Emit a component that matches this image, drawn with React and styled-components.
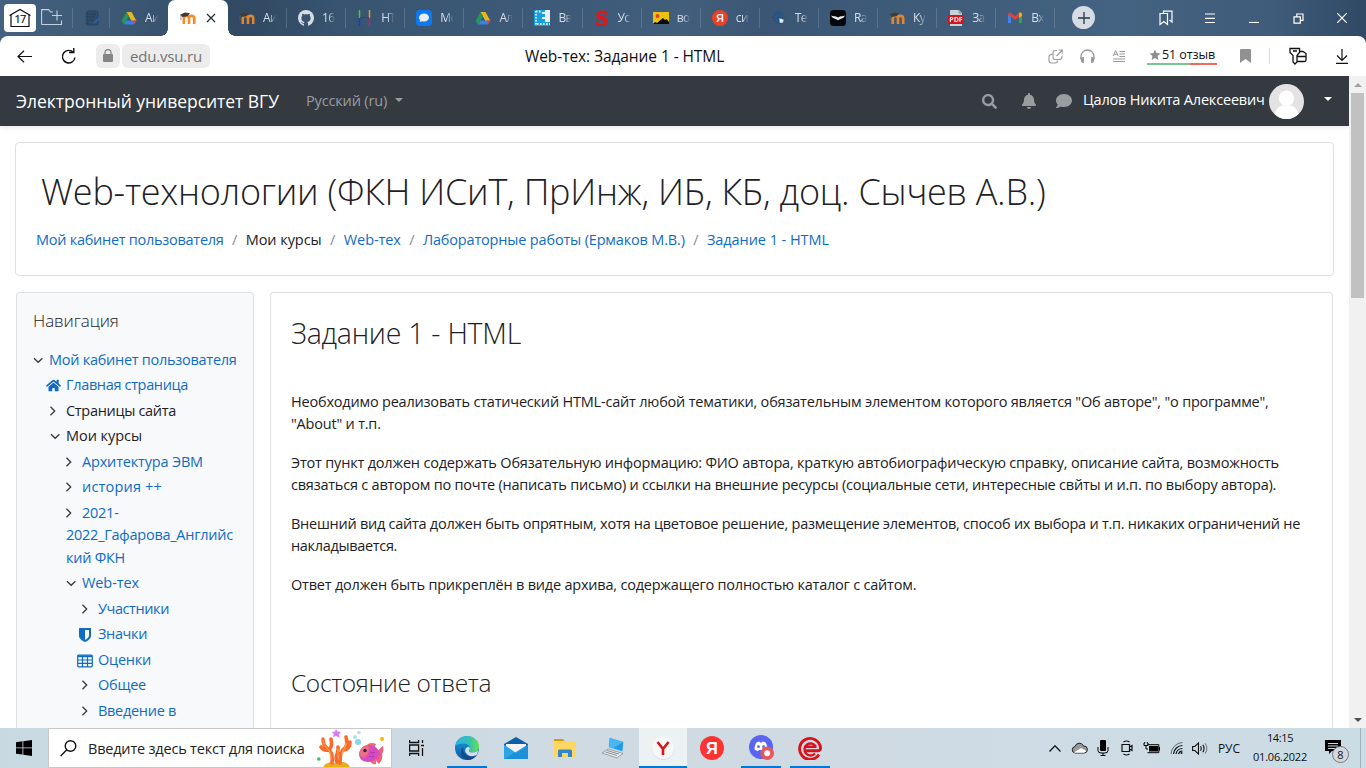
import React from 'react';
import styled, { createGlobalStyle, css } from 'styled-components';
import { FaHome, FaSearch, FaBell, FaComment } from 'react-icons/fa';

const Global = createGlobalStyle`
  * { box-sizing: border-box; }
  body { margin: 0; background: #fff; font-family: "Open Sans", "Noto Sans", sans-serif; overflow: hidden; }
  svg { display: block; flex: none; }
`;

/* ---------- shared ---------- */
const Screen = styled.div`
  width: 1366px;
  height: 768px;
  display: flex;
  flex-direction: column;
  overflow: hidden;
`;
const Label = styled.span`
  letter-spacing: ${p => p.$ls || 0}px;
  white-space: nowrap;
`;
const Cell = styled.div`
  width: ${p => p.$w}px;
  height: 100%;
  flex: none;
  display: flex;
  align-items: center;
  justify-content: center;
`;

/* ---------- browser chrome ---------- */
const Chrome = styled.header`
  flex: none;
  background: linear-gradient(90deg, #446280 0, #3a5672 10%, #314963 18%, #385470 25%, #3d5b79 42%, #415e7b 50%, #3a5674 56%, #3f5d7b 70%, #446281 82%, #3f5c7a 93%, #304965 100%);
`;
const TabStrip = styled.div`
  height: 36px;
  display: flex;
  align-items: stretch;
`;
const HomeButton = styled.div`
  width: 32px;
  height: 28px;
  flex: none;
  margin: 4px 4px 0;
  border-radius: 4px;
  background: #fff;
  display: flex;
  align-items: center;
  justify-content: center;
`;
const Tab = styled.div`
  width: ${p => p.$w || 59.1}px;
  flex: none;
  padding: 0 0 1px ${p => p.$pad || 11}px;
  display: flex;
  align-items: center;
  background: ${p => (p.$last ? 'none' : 'linear-gradient(#8599ab66, #8599ab66) right 8px / 1px 20px no-repeat')};
  svg { opacity: .9; }
`;
const TabTitle = styled.span`
  width: 14px;
  margin-left: 8px;
  overflow: hidden;
  white-space: nowrap;
  font-size: 12px;
  line-height: 18px;
  letter-spacing: -.6px;
  color: #d5dee6;
  mask-image: linear-gradient(90deg, #000 45%, transparent 95%);
`;
const ActiveTab = styled.div`
  position: relative;
  width: 60px;
  flex: none;
  padding: 0 12px 1px 12px;
  display: flex;
  align-items: center;
  justify-content: space-between;
  border-radius: 7px 7px 0 0;
  background: #fff;
  &::before, &::after {
    content: '';
    position: absolute;
    bottom: 0;
    width: 7px;
    height: 7px;
  }
  &::before { left: -7px; background: radial-gradient(circle at 0 0, transparent 6.5px, #fff 7px); }
  &::after { right: -7px; background: radial-gradient(circle at 100% 0, transparent 6.5px, #fff 7px); }
`;
const NewTab = styled.div`
  width: 23px;
  height: 23px;
  flex: none;
  margin: 6px 49px 0 17px;
  border-radius: 50%;
  background: #d5dce3;
  display: flex;
  align-items: center;
  justify-content: center;
`;
const Toolbar = styled.div`
  height: 40px;
  display: flex;
  align-items: center;
  background: #fff;
  border-radius: 8px 8px 0 0;
`;
const Pill = styled.div`
  width: ${p => p.$w}px;
  height: 24px;
  margin-right: 2px;
  border-radius: 6px;
  background: #ececec;
  color: #737373;
  font-size: 15px;
  display: flex;
  align-items: center;
  justify-content: center;
`;
const PageTitle = styled.div`
  width: 514px;
  margin-left: 313px;
  font-size: 15.5px;
  line-height: 24px;
  color: #111;
`;
const Rating = styled.div`
  width: 70px;
  height: 20px;
  margin: -2px 12px 0;
  padding-left: 2px;
  display: flex;
  align-items: center;
  gap: 1px;
  font-size: 12.5px;
  line-height: 18px;
  color: #111;
  background: linear-gradient(90deg, #77c796 0 61%, #ed6a5c 61%) 0 100% / 100% 2px no-repeat;
`;
const Divider = styled.div`
  width: 1px;
  height: 16px;
  margin: 0 6px 0 8px;
  background: #dcdcdc;
`;

/* ---------- site ---------- */
const Viewport = styled.div`
  height: 652px;
  flex: none;
  display: flex;
`;
const Page = styled.div`
  width: 1349px;
  display: flex;
  flex-direction: column;
  overflow: hidden;
`;
const Navbar = styled.nav`
  height: 50px;
  flex: none;
  padding-left: 16px;
  display: flex;
  align-items: center;
  background: #343a40;
  box-shadow: 0 2px 4px rgba(0, 0, 0, .08);
`;
const Brand = styled.div`
  width: 290px;
  font-size: 17.5px;
  line-height: 24px;
  color: #fff;
`;
const Language = styled.div`
  flex: 1;
  display: flex;
  align-items: center;
  gap: 8px;
  font-size: 14.5px;
  line-height: 22px;
  color: #9a9da0;
`;
const Caret = styled.i`
  border: 4.5px solid transparent;
  border-top-color: currentColor;
  border-bottom: 0;
  margin-bottom: ${p => p.$lift || 0}px;
`;
const NavIcon = styled.div`
  width: ${p => p.$w}px;
  display: flex;
  justify-content: center;
  color: #9a9da0;
`;
const User = styled.div`
  margin-left: 4px;
  display: flex;
  align-items: center;
  gap: 4px;
  font-size: 14.5px;
  line-height: 22px;
  color: #fff;
`;
const UserName = styled.div`
  width: 182px;
  padding-bottom: 3px;
`;
const UserCaret = styled.div`
  width: 45px;
  padding: 0 0 4px 20px;
  display: flex;
  color: #fff;
`;
const card = css`
  border: 1px solid #dee0e2;
  border-radius: 4px;
`;
const HeaderCard = styled.section`
  ${card}
  height: 134px;
  flex: none;
  margin: 16px 15px 16px;
  padding: 23px 20px 0;
`;
const CourseTitle = styled.h1`
  margin: 0 0 0 5px;
  font-size: 36px;
  line-height: 52px;
  font-weight: 300;
  color: #1d2125;
`;
const Breadcrumb = styled.ol`
  margin: 11px 0 0;
  padding: 0;
  list-style: none;
  display: flex;
  font-size: 14.5px;
  line-height: 22px;
`;
const Crumb = styled.li`
  color: ${p => (p.$plain ? '#1d2125' : '#0f6cc5')};
  &:not(:first-child)::before {
    content: '/';
    padding: 0 8.4px;
    color: #868e96;
  }
`;
const Columns = styled.div`
  flex: 1;
  padding: 0 16px;
  display: flex;
  align-items: stretch;
  gap: 16px;
`;
const Sidebar = styled.aside`
  ${card}
  width: 238px;
  border-bottom: 0;
  border-radius: 4px 4px 0 0;
  padding: 16px 0 0 11px;
  background: #f8f9fb;
`;
const BlockTitle = styled.h5`
  margin: 0 0 14.4px 5px;
  font-size: 17px;
  line-height: 24px;
  font-weight: 300;
  color: #1d2125;
`;
const TreeItem = styled.div`
  padding: 1.5px 0 1.5px ${p => p.$indent}px;
  font-size: 14.5px;
  line-height: 22.5px;
  color: ${p => (p.$plain ? '#1d2125' : '#0f6cc5')};
  white-space: nowrap;
`;
const TreeIcon = styled.span`
  display: inline-flex;
  align-items: center;
  justify-content: center;
  width: 16px;
  height: 16px;
  margin: 0 5px 0 ${p => (p.$hang ? -5 : 0)}px;
  vertical-align: -3px;
`;
const Main = styled.main`
  ${card}
  width: 1063px;
  border-bottom: 0;
  border-radius: 4px 4px 0 0;
  padding: 19px 20px 0;
  color: #1d2125;
`;
const Heading = styled.h2`
  margin: 0 0 37px;
  font-size: 28.5px;
  line-height: 42px;
  font-weight: 300;
`;
const SubHeading = styled.h3`
  margin: 69px 0 0;
  font-size: 24.5px;
  line-height: 36px;
  font-weight: 300;
`;
const Paragraph = styled.p`
  margin: 0 0 17px;
  font-size: 14.5px;
  line-height: 22px;
`;
const Line = styled.span`
  display: block;
  white-space: nowrap;
  letter-spacing: ${p => p.$ls}px;
`;
const Scrollbar = styled.div`
  width: 17px;
  padding: 7px 0 6px;
  display: flex;
  flex-direction: column;
  align-items: center;
  background: #f1f1f1;
`;
const Thumb = styled.div`
  width: 13px;
  height: 205px;
  margin: 6px 0 auto;
  background: #c1c1c1;
`;
const Arrow = styled.i`
  border: 4px solid transparent;
  ${p => (p.$up ? 'border-bottom-color: #a3a3a3; border-top: 0;' : 'border-top-color: #505050; border-bottom: 0;')}
`;

/* ---------- taskbar ---------- */
const Taskbar = styled.footer`
  height: 40px;
  flex: none;
  display: flex;
  align-items: stretch;
  background: linear-gradient(90deg, #c9d9e2, #cfdae3 40%, #cfdbe4 70%, #cbdce4);
`;
const SearchBox = styled.div`
  width: 344px;
  border: 1px solid #c8c8c8;
  padding-left: 11px;
  display: flex;
  align-items: center;
  background: #fff;
  font-size: 14.5px;
  color: #222;
`;
const SearchText = styled.div`
  width: 229px;
  margin-left: 11px;
`;
const TaskButton = styled.div`
  width: 48px;
  margin-right: 1px;
  padding-bottom: 1px;
  display: flex;
  align-items: center;
  justify-content: center;
  background:
    ${p => (p.$state ? `linear-gradient(#0078d7, #0078d7) 50% 100% / ${p.$state === 'active' ? 48 : 40}px 2px no-repeat` : 'linear-gradient(transparent, transparent)')},
    ${p => (p.$state === 'active' ? '#ecf1f4' : 'transparent')};
`;
const Tray = styled.div`
  margin-left: auto;
  display: flex;
  align-items: center;
`;
const TrayText = styled.div`
  width: 36px;
  text-align: center;
  font-size: 12px;
  color: #111;
`;
const Clock = styled.div`
  width: 66px;
  padding-bottom: 2px;
  display: flex;
  flex-direction: column;
  align-items: center;
  font-size: 11px;
  line-height: 19px;
  color: #111;
`;
const Notifications = styled.div`
  position: relative;
  width: 48px;
  height: 40px;
  padding: 12px 0 0 12px;
  border-right: 1px solid #9fb0ba;
  margin-right: 5px;
`;
const Badge = styled.span`
  position: absolute;
  left: 19px;
  top: 18px;
  width: 17px;
  height: 17px;
  border: 1px solid #777;
  border-radius: 50%;
  background: #d3dadf;
  font-size: 11px;
  line-height: 15px;
  text-align: center;
  color: #111;
`;

/* ---------- icons ---------- */
const Stroke = ({ w = 16, h = w, vb, d, color = '#111', sw = 1.2, children }) => (
  <svg width={w} height={h} viewBox={vb || `0 0 ${w} ${h}`} fill="none" stroke={color} strokeWidth={sw}>
    {d && <path d={d} />}
    {children}
  </svg>
);

const Fav = ({ children }) => <svg width="16" height="16" viewBox="0 0 16 16">{children}</svg>;

const Moodle = () => (
  <Fav>
    <path d="M3.8 14V8.500a2.600 2.600 0 0 1 5.200 0V14M9 14V8.500a2.600 2.600 0 0 1 5.200 0V14" fill="none" stroke="#f68b28" strokeWidth="2.600" />
    <path d="M0 4.800 5 2.500l5 .8-2.500 3-5 .7z" fill="#3d3b39" /><path d="M1 5v5" stroke="#6b6661" strokeWidth=".7" />
  </Fav>
);
const Drive = () => (
  <Fav>
    <path d="M5.500 2h5l5 9h-5z" fill="#fbc116" /><path d="M5.500 2 .5 11 3 14.500 8 6.200z" fill="#21a05a" />
    <path d="M5.500 10.500h10L13 14.500H3z" fill="#4083ee" /><path d="m12.500 10.500 3 0-2.500 4z" fill="#e34234" />
  </Fav>
);
const Github = () => (
  <Fav>
    <circle cx="8" cy="8" r="8" fill="#e8edf1" />
    <path d="M6 16v-2.200c-2 .4-2.500-1.200-3.300-1.700 1.600-.3 1.500 1.300 3.400.8.1-.6.3-.8.5-1C4.300 11.500 3.400 10 3.400 7.900c0-.9.3-1.600.8-2.200-.2-.7-.1-1.500.1-2 .9 0 1.500.4 2.100.8 1-.2 2.200-.2 3.200 0 .6-.4 1.200-.8 2.100-.8.2.5.3 1.300.1 2 .5.6.8 1.300.8 2.200 0 2.100-.9 3.600-3.200 4 .4.4.6 1 .6 1.700V16z" fill="#385470" />
  </Fav>
);
const HLines = () => (
  <Fav><g strokeWidth="1.500"><path d="M2.500 0v8" stroke="#3be01c" /><path d="M2.500 8v8" stroke="#1734e8" /><path d="M12.500 0v8" stroke="#ffa41c" /><path d="M12.500 8v8" stroke="#f10c78" /></g><path d="M3 7.500h9" stroke="#8f1c4e" /></Fav>
);
const Chat = () => (
  <Fav><rect width="16" height="16" rx="4" fill="#0a7cff" /><path d="M8 3.500c3 0 5 1.700 5 4s-2 4-5 4c-.7 0-1.300 0-1.900-.2L3.500 12l.6-1.800C3.400 9.500 3 8.600 3 7.500c0-2.300 2-4 5-4z" fill="#fff" /></Fav>
);
const Film = () => (
  <Fav><rect width="16" height="16" fill="#11a9ec" /><path d="M11 0h5v12h-5V9H8V7h3V4H8V2h3z" fill="#fff" /><path d="M2 1v15M3 14h13M2 1.500h6" stroke="#fff" strokeWidth="1.800" strokeDasharray="1.600 1.400" /></Fav>
);
const LetterS = () => (
  <Fav><text x="8" y="15.500" textAnchor="middle" fontFamily="Liberation Serif, serif" fontWeight="700" fontSize="23" stroke="#f40f0f" strokeWidth=".8" fill="#f40f0f">S</text></Fav>
);
const Photo = () => (
  <Fav><rect y="2" width="16" height="12" fill="#ffcc00" /><circle cx="4.500" cy="6" r="1.900" fill="#f33" /><path d="M0 14l2-2 2 1 6-5 2 2 1.500-1L16 12v2z" fill="#000" /></Fav>
);
const Yandex = ({ size = 16, bg = '#fc3f1d' }) => (
  <svg width={size} height={size} viewBox="0 0 16 16"><circle cx="8" cy="8" r="8" fill={bg} /><text x="8" y="12" textAnchor="middle" fontFamily="Liberation Sans, sans-serif" fontWeight="700" fontSize="11" fill="#fff">Я</text></svg>
);
const Wheel = () => (
  <Fav><g fill="none" stroke="#1a5591" strokeWidth="1.200"><circle cx="7.500" cy="7.500" r="4.800" /><path d="M7.500.5v14M.5 7.500h14M2.500 2.500l10 10M12.500 2.500l-10 10" strokeWidth=".9" /></g><path d="m8 8 5 1.500-1 3.500-3.500 0z" fill="#fff" stroke="#1a5591" strokeWidth=".5" /></Fav>
);
const Bird = () => (
  <Fav><rect width="16" height="16" rx="3.500" fill="#000" /><path d="M1 5.500c2 .7 3.700.6 5.500 1.200L8 7.500l1.500-.8C11.300 6.100 13 6.200 15 5.500c-.7 1.600-2 2.500-4 3.300L8 10.300 5 8.800C3 8 1.700 7.100 1 5.500z" fill="#fff" /></Fav>
);
const Pdf = () => (
  <Fav><path d="M2 0h9l3 3v13H2z" fill="#d8dde1" /><path d="M11 0v3h3" fill="none" stroke="#708090" strokeWidth=".8" /><rect y="5" width="16" height="9" fill="#e30b17" /><text x="8" y="12.200" textAnchor="middle" fontFamily="Open Sans, sans-serif" fontWeight="700" fontSize="7" fill="#fff">PDF</text></Fav>
);
const Gmail = () => (
  <Fav><path d="M1 4v9h3V6z" fill="#4285f4" /><path d="M15 4v9h-3V6z" fill="#34a853" /><path d="M1 4.500C1 2.500 3 2 4 3l4 3.200L12 3c1-1 3-.5 3 1.500L8 10z" fill="#ea4335" /><path d="M12 3c1-1 3-.5 3 1.500V6l-3 2z" fill="#fbbc04" /></Fav>
);
const Notebook = () => (
  <Fav><rect x="2" y="1" width="11" height="14" rx="1" fill="#2f4b68" stroke="#27405a" /><path d="M5 4h6M5 7h5M5 10h3M0.500 4h3M.5 7h3M.5 10h3M.5 13h3" stroke="#243b56" /><path d="m8 13 6-6 1.500 1.500L9.500 14z" fill="#2164a8" /></Fav>
);

const ChevronDown = () => <Stroke sw={1.3} color="#343a40" d="M6 6.200 10.200 10.300 14.400 6.200" />;
const ChevronRight = () => <Stroke sw={1.3} color="#343a40" d="M5.500 3.800 9.700 8 5.500 12.200" />;
const ShieldIcon = () => (
  <svg width="12" height="14" viewBox="0 0 12 14" fill="#0f6cc5"><path fillRule="evenodd" d="M.5 0h11q.5 0 .5.500V7.500C12 10.700 9 12.700 6 14 3 12.700 0 10.700 0 7.500V.5Q0 0 .5 0zM6 2v9.900C8.300 10.700 10 9.300 10 7.500V2z" /></svg>
);
const TableIcon = () => (
  <svg width="16" height="14" viewBox="0 0 16 14" fill="none" stroke="#0f6cc5" strokeWidth="1.200"><rect x=".7" y="1" width="14.600" height="11.800" rx="1" /><path d="M1 2.200h14" strokeWidth="2" /><path d="M1 6h14M1 9.300h14M5.500 2v11M10.500 2v11" /></svg>
);

const Avatar = () => (
  <svg width="35" height="35" viewBox="0 0 35 35">
    <defs><clipPath id="face"><circle cx="17.500" cy="17.500" r="17.500" /></clipPath></defs>
    <g clipPath="url(#face)"><rect width="35" height="35" fill="#e3e3e3" /><circle cx="17.500" cy="14.200" r="7.700" fill="#fff" /><path d="M5 35c0-8 4-13 8.500-13.500h8C26 22 30 27 30 35z" fill="#fff" /></g>
  </svg>
);

const Reef = () => (
  <svg width="72" height="38" viewBox="0 0 72 38">
    <path d="M6 38c3-5 7-5 13-4 6-2 12-1 14 4z" fill="#e7ae1d" />
    <g fill="none" stroke="#f96a2b" strokeLinecap="round" strokeWidth="3.600">
      <path d="M15 34c1-9-1-12-5-15-3-2-4-5-4-9M12 21c-4 1-6 0-8-3M13 20c3-4 1-7 1-10" />
      <path d="M23 34c0-9 1-12 5-15 3-3 2-6 1-11M27 21c5-1 6-4 6-8M20 33c-3-6 2-8 1-15" />
    </g>
    <g fill="none" stroke="#ff9d4a" strokeLinecap="round" strokeWidth="1.300"><path d="M14 30c0-8-2-8-6-13M25 25c1-5 4-5 4-11M21 28v-8M6 11l1 4" /></g>
    <path d="m19 0 1.500 2.500L24 3l-2 2.300.5 3.200L19 7l-3 1 .8-3L15 3l3-.5z" fill="#d77df2" />
    <circle cx="41" cy="13" r="3" fill="#8ad3f3" /><circle cx="38" cy="8" r="2" fill="#a9e0f7" /><circle cx="42" cy="3.500" r="1.700" fill="#a9e0f7" />
    <circle cx="65" cy="10" r="2" fill="#f5b700" /><circle cx="1.800" cy="30" r="1.800" fill="#39c06a" />
    <path d="M60 24c2-4 4-6 6-7 1 4 0 6-1 8 1 3 0 6-3 10-3-3-4-5-4-8z" fill="#ee5f7c" />
    <path d="M49 17c2-3 6-4 10-2l-2 5zM53 32c1 2 3 4 6 3l0-5z" fill="#f06a6a" />
    <path d="M42 25c1-6 5-9 10-9 6 0 9 4 11 8-2 5-6 9-12 9-5 0-9-3-9-8z" fill="#d44cbf" />
    <path d="M42 25c1-6 5-9 9-9 2 5 0 10-3 12-2 1-4 0-6-3z" fill="#ee6e83" /><circle cx="48" cy="21.500" r="1.700" fill="#3a1b4a" />
    <path d="M53 23c2 1 4 1 5 0M52 27c2 1 4 1 5 0" stroke="#a9349f" fill="none" />
  </svg>
);

const Edge = () => (
  <svg width="24" height="24" viewBox="0 0 24 24">
    <defs>
      <linearGradient id="e1" x1="0" x2="1"><stop offset="0" stopColor="#2bb4e4" /><stop offset=".6" stopColor="#35c1b1" /><stop offset="1" stopColor="#6be04a" /></linearGradient>
      <linearGradient id="e2" x1="0" y1="0" x2="0" y2="1"><stop offset="0" stopColor="#1b9de2" /><stop offset="1" stopColor="#0c59a4" /></linearGradient>
    </defs>
    <circle cx="12" cy="12" r="12" fill="url(#e2)" />
    <path d="M.2 10C1.200 4 6 0 12 0c7 0 12 5 12 10.500 0 3.500-2.800 6-6 6-2.500 0-4.200-.8-4.200-1.800 0-.6 1-1 1-2.700 0-2.200-2.300-4.500-6-4.500C4.500 7.500 1.500 8.500.2 10z" fill="url(#e1)" />
    <path d="M8.500 11c-1.500 6 2.500 9.500 7.500 9.500 3 0 4.800-.8 6-1.600C20 22 16 24 12.500 24 8 23 6 19.500 6 16.500c0-2.500 1-4.500 2.500-5.500z" fill="#124a8c" />
    <path d="M13.800 14.700c0 1 1.700 1.800 4.200 1.800 2 0 4-.8 5.300-2.400-.2 1.800-.8 3.500-1.800 5-3 1.800-9 2-11.200-3.300-.6-2.300.7-4.500 3-5 1 .4 1.500 1.200 1.500 2 0 1-1 1.300-1 1.900z" fill="#d4dfe7" />
  </svg>
);
const Mail = () => (
  <svg width="24" height="22" viewBox="0 0 24 22"><path d="M0 7 12 0l12 7v4H0z" fill="#0f5ea8" /><path d="M2 7h20v8H2z" fill="#f4f4f4" /><path d="M0 7.500 12 16l12-8.500V22H0z" fill="#2aa5e6" /><path d="M0 22 24 7.500V22z" fill="#1686d4" opacity=".65" /></svg>
);
const Explorer = () => (
  <svg width="22" height="18" viewBox="0 0 22 18"><path d="M0 1q0-1 1-1h8l1.500 2H0z" fill="#d9970b" /><path d="M0 2h21q1 0 1 1v15H0z" fill="#ffd661" /><path d="M4 18v-6q0-1.500 1.500-1.500h11Q18 10.500 18 12v6h-4v-4H8v4z" fill="#2f87cf" /></svg>
);
const Laptop = () => (
  <svg width="24" height="22" viewBox="0 0 24 22"><path d="m7 0 15 4.500-1 11L6 11z" fill="#bcd7ea" /><path d="m7.800 1 13.400 4-.8 9.200L7 10z" fill="#1f9be6" /><path d="m7.800 1 13.400 4-10 6.200L7 10z" fill="#49b5f2" /><path d="m6 12 15 4.500L15 21 0 16z" fill="#e8ebee" stroke="#7b868e" strokeWidth=".7" /><path d="m5 13.500 12 3.600M3.500 15l11.500 3.500" stroke="#7b868e" strokeWidth=".9" /></svg>
);
const YBrowser = () => (
  <svg width="24" height="24" viewBox="0 0 24 24"><circle cx="12" cy="12.500" r="11.300" fill="#c9ccce" /><circle cx="12" cy="12" r="11.300" fill="#f7f7f7" /><path d="M6.500 6l5.500 7 5.500-7M12 12v7" fill="none" stroke="#d9141e" strokeWidth="2.600" /></svg>
);
const Discord = () => (
  <svg width="25" height="25" viewBox="0 0 25 25"><circle cx="12" cy="12" r="12" fill="#5965f0" /><path d="M7.500 7.500c1-.5 2-.8 3-.9l.5.9h2l.5-.9c1 .1 2 .4 3 .9 1.300 2 2 4.300 2 7-1 .9-2.300 1.500-3.500 1.700l-.8-1.300H9.800L9 16.200c-1.200-.2-2.500-.8-3.500-1.700 0-2.700.7-5 2-7z" fill="#fff" /><circle cx="9.500" cy="11.700" r="1.400" fill="#5965f0" /><circle cx="14.500" cy="11.700" r="1.400" fill="#5965f0" /><circle cx="18.200" cy="18.200" r="6.800" fill="#e9565a" /><circle cx="18.200" cy="18.200" r="3" fill="#fff" /></svg>
);
const ELogo = () => (
  <svg width="24" height="24" viewBox="0 0 24 24" fill="none" stroke="#d8121d" strokeWidth="2.900"><path d="M21 18.500A10.500 10.500 0 1 1 22.500 11.500c.2 2-.7 3.300-2.500 3.300H7.500" /><path d="M17.800 10.600A6 6 0 1 0 17 17.500M8 10.700h10.500" strokeWidth="2.400" /></svg>
);

/* ---------- data ---------- */
const tabs = [
  [Moodle, 'Аи'], [Github, '16'], [HLines, 'HT'], [Chat, 'Ме'], [Drive, 'Ал'], [Film, 'Вв'], [LetterS, 'Ус'],
  [Photo, 'во'], [Yandex, 'си'], [Wheel, 'Те'], [Bird, 'Ra'], [Moodle, 'Ку'], [Pdf, 'За'], [Gmail, 'Вх'],
];
const crumbs = [
  ['Мой кабинет пользователя', -.27], ['Мои курсы', -.05, true], ['Web-тех', -.09],
  ['Лабораторные работы (Ермаков М.В.)', -.17], ['Задание 1 - HTML', -.06],
];
const tree = [
  { level: 0, icon: 'down', text: ['Мой кабинет пользователя'], ls: -.27 },
  { level: 1, icon: 'home', text: ['Главная страница'], ls: -.34 },
  { level: 1, icon: 'right', text: ['Страницы сайта'], ls: -.31, plain: true },
  { level: 1, icon: 'down', text: ['Мои курсы'], ls: -.05, plain: true },
  { level: 2, icon: 'right', text: ['Архитектура ЭВМ'], ls: -.18 },
  { level: 2, icon: 'right', text: ['история ++'], ls: .18 },
  { level: 2, icon: 'right', text: ['2021-', '2022_Гафарова_Английс', 'кий ФКН'], ls: -.25 },
  { level: 2, icon: 'down', text: ['Web-тех'], ls: -.09 },
  { level: 3, icon: 'right', text: ['Участники'], ls: -.41 },
  { level: 3, icon: 'shield', text: ['Значки'], ls: -.37 },
  { level: 3, icon: 'table', text: ['Оценки'], ls: -.24 },
  { level: 3, icon: 'right', text: ['Общее'], ls: -.25 },
  { level: 3, icon: 'right', text: ['Введение в'], ls: -.29 },
];
const indents = [5, 22, 38, 54];
const icons = {
  down: <ChevronDown />, right: <ChevronRight />, home: <FaHome size={15} />,
  shield: <ShieldIcon />, table: <TableIcon />,
};
const paragraphs = [
  [['Необходимо реализовать статический HTML-сайт любой тематики, обязательным элементом которого является "Об авторе", "о программе",', -.2], ['"About" и т.п.', -.2]],
  [['Этот пункт должен содержать Обязательную информацию: ФИО автора, краткую автобиографическую справку, описание сайта, возможность', -.195], ['связаться с автором по почте (написать письмо) и ссылки на внешние ресурсы (социальные сети, интересные свйты и и.п. по выбору автора).', -.22]],
  [['Внешний вид сайта должен быть опрятным, хотя на цветовое решение, размещение элементов, способ их выбора и т.п. никаких ограничений не', -.257], ['накладывается.', -.33]],
  [['Ответ должен быть прикреплён в виде архива, содержащего полностью каталог с сайтом.', -.21]],
];

function BrowserChrome() {
  return (
    <Chrome>
      <TabStrip>
        <HomeButton>
          <Stroke w={24} h={20} sw={1.2}>
            <path d="M1.500 7.500 12 1.500 22.500 7.500M3 7v11.500h18V7" />
            <text x="12" y="15.300" textAnchor="middle" fontFamily="Open Sans, sans-serif" fontSize="11" letterSpacing="-.8" fill="#111" stroke="#111" strokeWidth=".2">17</text>
          </Stroke>
        </HomeButton>
        <Tab $w={33} $pad={1}>
          <Stroke w={22} h={17} color="#d3dee8" d="M.6 15.500V.6h7l2 2.400H12M11 6.500h10M16 1.500v10M20.500 11.500v4H.6" sw={1.1} />
        </Tab>
        <Tab $w={37} $pad={12}><Notebook /></Tab>
        <Tab $w={58} $last><Drive /><TabTitle>Аи</TabTitle></Tab>
        <ActiveTab><Moodle /><Stroke w={10} color="#222b38" d="m1 1 8 8M9 1 1 9" /></ActiveTab>
        {tabs.map(([Icon, title], i) => <Tab key={i}><Icon /><TabTitle>{title}</TabTitle></Tab>)}
        <NewTab><Stroke w={12} color="#26384a" sw={1.3} d="M6 0v12M0 6h12" /></NewTab>
        <Cell $w={44}><Stroke w={14} h={16} color="#fff" d="M1 3.500h7.500V14.500L4.800 11.500 1 14.500zM4.500 3.500V1.200H13V12l-2.500-2" /></Cell>
        <Cell $w={44}><Stroke w={10} color="#fff" d="M0 1h10M0 5.300h10M0 9.500h10" /></Cell>
        <Cell $w={44}><Stroke w={10} color="#fff" d="M0 9.500h10" /></Cell>
        <Cell $w={44}><Stroke w={11} color="#fff" d="M1 3.800h6.300v6.300H1zM3.800 3.500V1H10v6.300H7.500" /></Cell>
        <Cell $w={44}><Stroke w={10} color="#fff" d="m0 0 10 10M10 0 0 10" /></Cell>
      </TabStrip>
      <Toolbar>
        <Cell $w={48}><Stroke w={15} h={13} d="M15 6.500H1M7 .7 1 6.500l6 5.800" /></Cell>
        <Cell $w={40}><Stroke w={15} h={17} sw={1.4} d="M12.500 4.500a6.300 6.300 0 1 0 1.500 5M8 4.500h4.800V0" /></Cell>
        <Cell $w={8} />
        <Pill $w={24}>
          <svg width="10" height="14" viewBox="0 0 10 14"><rect y="5" width="10" height="8" rx="1" fill="#858585" /><path d="M2 5V3.500a3 3 0 0 1 6 0V5" fill="none" stroke="#858585" strokeWidth="1.300" /></svg>
        </Pill>
        <Pill $w={88}><Label $ls={-.19}>edu.vsu.ru</Label></Pill>
        <PageTitle><Label $ls={-.08}>Web-тех: Задание 1 - HTML</Label></PageTitle>
        <Cell $w={32}><Stroke w={15} color="#999" sw={1.100} d="M4.500 5.500H3.500Q1 5.500 1 8v3.500Q1 14 3.500 14H7q2.500 0 2.500-2.500M9 1.500H7.500Q5 1.500 5 4v4q0 2.500 2.500 2.500h4Q14 10.500 14 8V6.500M8.500 7 14 1.500M10.500 1h3.700v3.700" /></Cell>
        <Cell $w={32}>
          <svg width="15" height="14" viewBox="0 0 15 14"><path d="M1 10V7.500a6.500 6.500 0 0 1 13 0V10" fill="none" stroke="#999" strokeWidth="1.300" /><path d="M.5 8.500 4 8v6H3Q.5 13 .5 10zM14.500 8.500 11 8v6h1q2.500-1 2.500-4z" fill="#999" /></svg>
        </Cell>
        <Cell $w={32}><Stroke w={12} color="#999" sw={1} d="M.3 6 2.700.5 5.200 6M1.200 4.200h3M6.500 1.500H12M6.500 4H12M6.500 6.500H12M0 9h12M0 11.500h12" /></Cell>
        <Rating>
          <svg width="12" height="14" viewBox="0 0 12 14"><path d="m6 1.500 1.500 3.600 4 .3-3 2.600.9 3.900L6 9.900l-3.400 2 .9-3.900L.5 5.400l4-.3z" fill="#8d8d8d" /></svg>
          <Label $ls={-.1}>51 отзыв</Label>
        </Rating>
        <Cell $w={32}><svg width="11" height="14" viewBox="0 0 11 14"><path d="M0 1q0-1 1-1h9q1 0 1 1v13l-5.500-4L0 14z" fill="#919191" /></svg></Cell>
        <Divider />
        <Cell $w={44}><Stroke w={18} h={18} sw={1.3} d="M1 1.500h9.500v4L8 8.500V15l-2 2-2-2V8.500L1 5.500zM4 4h4M10.500 4.500H14L17 6.500V13q0 1.500-1.500 1.500H8M8.500 9.500H17" /></Cell>
        <Cell $w={44}><Stroke w={12} h={15} d="M6 0v11M1 6.500 6 11.500l5-5M0 14.300h12" /></Cell>
      </Toolbar>
    </Chrome>
  );
}

function Navigation() {
  return (
    <Sidebar>
      <BlockTitle><Label $ls={-.1}>Навигация</Label></BlockTitle>
      {tree.map((item, i) => {
        const hang = item.text.length > 1;
        return (
          <TreeItem key={i} $plain={item.plain} $indent={indents[item.level] - (item.level === 0 ? 5 : hang ? 0 : 5)}>
            <TreeIcon $hang={hang}>{icons[item.icon]}</TreeIcon>
            {item.text.map((line, n) => <React.Fragment key={line}>{n > 0 && <br />}<Label $ls={item.ls}>{line}</Label></React.Fragment>)}
          </TreeItem>
        );
      })}
    </Sidebar>
  );
}

function Site() {
  return (
    <Viewport>
      <Page>
        <Navbar>
          <Brand><Label $ls={-.03}>Электронный университет ВГУ</Label></Brand>
          <Language><Label $ls={-.16}>Русский (ru)</Label><Caret $lift={2} /></Language>
          <NavIcon $w={40}><FaSearch size={15} /></NavIcon>
          <NavIcon $w={40}><FaBell size={16} /></NavIcon>
          <NavIcon $w={30}><FaComment size={16} /></NavIcon>
          <User>
            <UserName><Label $ls={-.18}>Цалов Никита Алексеевич</Label></UserName>
            <Avatar />
          </User>
          <UserCaret><Caret /></UserCaret>
        </Navbar>
        <HeaderCard>
          <CourseTitle><Label $ls={-.25}>Web-технологии (ФКН ИСиТ, ПрИнж, ИБ, КБ, доц. Сычев А.В.)</Label></CourseTitle>
          <Breadcrumb>
            {crumbs.map(([text, ls, plain]) => <Crumb key={text} $plain={plain}><Label $ls={ls}>{text}</Label></Crumb>)}
          </Breadcrumb>
        </HeaderCard>
        <Columns>
          <Navigation />
          <Main>
            <Heading><Label $ls={-.26}>Задание 1 - HTML</Label></Heading>
            {paragraphs.map((lines, i) => (
              <Paragraph key={i}>{lines.map(([text, ls]) => <Line key={text} $ls={ls}>{text}</Line>)}</Paragraph>
            ))}
            <SubHeading><Label $ls={-.34}>Состояние ответа</Label></SubHeading>
          </Main>
        </Columns>
      </Page>
      <Scrollbar><Arrow $up /><Thumb /><Arrow /></Scrollbar>
    </Viewport>
  );
}

function WindowsTaskbar() {
  return (
    <Taskbar>
      <Cell $w={48}><svg width="16" height="16" viewBox="0 0 16 16"><path d="m0 2.200 6.500-.9v6.200H0zM7.300 1.200 16 0v7.500H7.300zM0 8.300h6.500v6.300L0 13.700zM7.300 8.300H16V16l-8.700-1.200z" /></svg></Cell>
      <SearchBox>
        <Stroke w={17} sw={1.400}><circle cx="10.500" cy="6" r="5.300" /><path d="M6.800 9.800.7 16" /></Stroke>
        <SearchText><Label $ls={-.2}>Введите здесь текст для поиска</Label></SearchText>
        <Reef />
      </SearchBox>
      <Cell $w={51}><Stroke w={18} h={16} vb="4 0 18 16" sw={1.300} d="M4.600 0v2.500h9V0M4.600 16v-2.500h9V16M4.600 5h9v6h-9zM17.500 0v3M17.500 8v8M16 5.500h3" /></Cell>
      <TaskButton $state="open"><Edge /></TaskButton>
      <TaskButton><Mail /></TaskButton>
      <TaskButton><Explorer /></TaskButton>
      <TaskButton><Laptop /></TaskButton>
      <TaskButton $state="active"><YBrowser /></TaskButton>
      <TaskButton><Yandex size={24} bg="#fb3333" /></TaskButton>
      <TaskButton $state="open"><Discord /></TaskButton>
      <TaskButton $state="open"><ELogo /></TaskButton>
      <Tray>
        <Cell $w={24}><Stroke w={12} h={7} d="m.5 6.500 5.500-5.700 5.500 5.700" sw={1.300} /></Cell>
        <Cell $w={24}><svg width="17" height="12" viewBox="0 0 17 12"><path d="M4 11a3.300 3.300 0 0 1 0-6.500A4.500 4.500 0 0 1 12.500 4 3.500 3.500 0 0 1 13.300 11z" fill="#999" stroke="#222" /><path d="M3 10.500 10 6l5.500 3-2.500 1.800H4z" fill="#fff" /></svg></Cell>
        <Cell $w={24}><svg width="12" height="16" viewBox="0 0 12 16"><rect x="3" width="6" height="11" rx="1" /><path d="M1 7v3.500Q1 13 4 13h4q3 0 3-2.500V7M6 13v2.500M3.500 15.500h5" fill="none" stroke="#000" /></svg></Cell>
        <Cell $w={24}><Stroke w={12} h={16} sw={1.200} d="M1 4.500h7.500v7H1zM8.500 7 11 5.500v5L8.500 9M2.500 2Q5.500 0 8.500 2M2.500 14q3 2 6 0" /></Cell>
        <Cell $w={25}><svg width="17" height="12" viewBox="0 0 17 12"><rect x="6" y="4" width="9" height="5.500" /><path d="M4.500 2.700h11.300v8H4.500M16.500 5v3.500M1 1v2.500h4V1M1.700 0v1.500M4.300 0v1.500M3 4v3h2" fill="none" stroke="#000" /></svg></Cell>
        <Cell $w={24}><svg width="13" height="14" viewBox="0 0 13 14" fill="none" stroke="#111"><path d="M1 13A12 12 0 0 1 12.500 1.500" opacity=".55" /><path d="M3.500 13a9 9 0 0 1 9-8.500M6 13a6.500 6.500 0 0 1 6.500-5.500M8.500 13a4 4 0 0 1 4-3" strokeWidth="1.200" /><circle cx="11.500" cy="12" r="1" fill="#111" stroke="none" /></svg></Cell>
        <Cell $w={23}><Stroke w={16} h={13} sw={1.100} d="M.6 4.500h2.200L6.500 1v11L2.800 8.500H.6zM8.500 4.300q1.500 2.200 0 4.400M10.800 2.800q2.500 3.700 0 7.400"><path d="M13 1.300q3.700 5.200 0 10.400" opacity=".45" /></Stroke></Cell>
        <TrayText>РУС</TrayText>
        <Clock><Label $ls={-.4}>14:15</Label><Label $ls={-.21}>01.06.2022</Label></Clock>
        <Notifications>
          <svg width="16" height="14" viewBox="0 0 16 14"><path d="M0 0h16v11H7l-3 3v-3H0z" /><path d="M3 3.500h10M3 6h10M3 8.500h7" stroke="#cbdce4" /></svg>
          <Badge>8</Badge>
        </Notifications>
      </Tray>
    </Taskbar>
  );
}

export default function App() {
  return (
    <Screen>
      <Global />
      <BrowserChrome />
      <Site />
      <WindowsTaskbar />
    </Screen>
  );
}
